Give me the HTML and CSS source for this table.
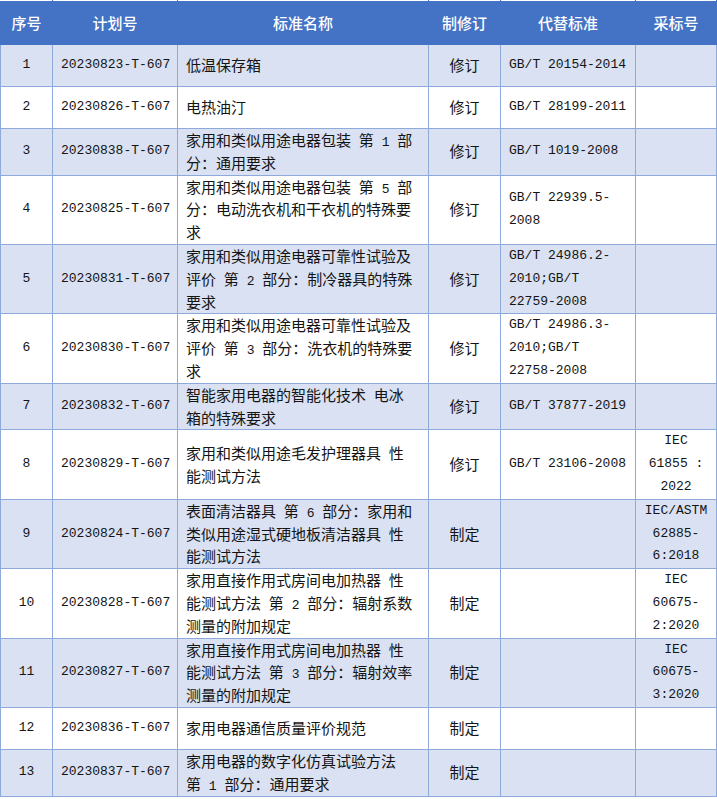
FILE: index.html
```html
<!DOCTYPE html>
<html lang="zh-CN">
<head>
<meta charset="utf-8">
<title>标准计划</title>
<link rel="stylesheet" href="styles.css">
</head>
<body>
<table class="std">
  <colgroup>
    <col class="c1"><col class="c2"><col class="c3"><col class="c4"><col class="c5"><col class="c6">
  </colgroup>
  <thead>
    <tr class="head">
      <th>序号</th><th>计划号</th><th>标准名称</th><th>制修订</th><th>代替标准</th><th>采标号</th>
    </tr>
  </thead>
  <tbody>
    <tr class="alt one">
      <td class="m ctr">1</td><td class="m">20230823-T-607</td><td>低温保存箱</td><td class="ctr">修订</td><td class="m">GB/T 20154-2014</td><td class="m ctr"></td>
    </tr>
    <tr class="one">
      <td class="m ctr">2</td><td class="m">20230826-T-607</td><td>电热油汀</td><td class="ctr">修订</td><td class="m">GB/T 28199-2011</td><td class="m ctr"></td>
    </tr>
    <tr class="alt">
      <td class="m ctr">3</td><td class="m">20230838-T-607</td><td>家用和类似用途电器包装<span class="s"> </span>第<span class="s"> 1 </span>部<br>分：通用要求</td><td class="ctr">修订</td><td class="m">GB/T 1019-2008</td><td class="m ctr"></td>
    </tr>
    <tr>
      <td class="m ctr">4</td><td class="m">20230825-T-607</td><td>家用和类似用途电器包装<span class="s"> </span>第<span class="s"> 5 </span>部<br>分：电动洗衣机和干衣机的特殊要<br>求</td><td class="ctr">修订</td><td class="m">GB/T 22939.5-<br>2008</td><td class="m ctr"></td>
    </tr>
    <tr class="alt">
      <td class="m ctr">5</td><td class="m">20230831-T-607</td><td>家用和类似用途电器可靠性试验及<br>评价<span class="s"> </span>第<span class="s"> 2 </span>部分：制冷器具的特殊<br>要求</td><td class="ctr">修订</td><td class="m">GB/T 24986.2-<br>2010;GB/T<br>22759-2008</td><td class="m ctr"></td>
    </tr>
    <tr>
      <td class="m ctr">6</td><td class="m">20230830-T-607</td><td>家用和类似用途电器可靠性试验及<br>评价<span class="s"> </span>第<span class="s"> 3 </span>部分：洗衣机的特殊要<br>求</td><td class="ctr">修订</td><td class="m">GB/T 24986.3-<br>2010;GB/T<br>22758-2008</td><td class="m ctr"></td>
    </tr>
    <tr class="alt">
      <td class="m ctr">7</td><td class="m">20230832-T-607</td><td>智能家用电器的智能化技术<span class="s"> </span>电冰<br>箱的特殊要求</td><td class="ctr">修订</td><td class="m">GB/T 37877-2019</td><td class="m ctr"></td>
    </tr>
    <tr>
      <td class="m ctr">8</td><td class="m">20230829-T-607</td><td>家用和类似用途毛发护理器具<span class="s"> </span>性<br>能测试方法</td><td class="ctr">修订</td><td class="m">GB/T 23106-2008</td><td class="m ctr">IEC<br>61855 :<br>2022</td>
    </tr>
    <tr class="alt">
      <td class="m ctr">9</td><td class="m">20230824-T-607</td><td>表面清洁器具<span class="s"> </span>第<span class="s"> 6 </span>部分：家用和<br>类似用途湿式硬地板清洁器具<span class="s"> </span>性<br>能测试方法</td><td class="ctr">制定</td><td class="m"></td><td class="m ctr">IEC/ASTM<br>62885-<br>6:2018</td>
    </tr>
    <tr>
      <td class="m ctr">10</td><td class="m">20230828-T-607</td><td>家用直接作用式房间电加热器<span class="s"> </span>性<br>能测试方法<span class="s"> </span>第<span class="s"> 2 </span>部分：辐射系数<br>测量的附加规定</td><td class="ctr">制定</td><td class="m"></td><td class="m ctr">IEC<br>60675-<br>2:2020</td>
    </tr>
    <tr class="alt">
      <td class="m ctr">11</td><td class="m">20230827-T-607</td><td>家用直接作用式房间电加热器<span class="s"> </span>性<br>能测试方法<span class="s"> </span>第<span class="s"> 3 </span>部分：辐射效率<br>测量的附加规定</td><td class="ctr">制定</td><td class="m"></td><td class="m ctr">IEC<br>60675-<br>3:2020</td>
    </tr>
    <tr class="one">
      <td class="m ctr">12</td><td class="m">20230836-T-607</td><td>家用电器通信质量评价规范</td><td class="ctr">制定</td><td class="m"></td><td class="m ctr"></td>
    </tr>
    <tr class="alt">
      <td class="m ctr">13</td><td class="m">20230837-T-607</td><td>家用电器的数字化仿真试验方法<br>第<span class="s"> 1 </span>部分：通用要求</td><td class="ctr">制定</td><td class="m"></td><td class="m ctr"></td>
    </tr>
  </tbody>
</table>
</body>
</html>
```

FILE: styles.css
```css
html, body {
  margin: 0;
  padding: 0;
  background: #ffffff;
}

.std {
  border-collapse: collapse;
  table-layout: fixed;
  width: 716px;
  margin: 0;
  color: #141414;
  font-family: "Noto Sans CJK SC", "Noto Sans", sans-serif;
  font-size: 15px;
}

.c1 { width: 52px; }
.c2 { width: 125px; }
.c3 { width: 251px; }
.c4 { width: 72px; }
.c5 { width: 135px; }
.c6 { width: 81px; }

.head {
  height: 44px;
  background: #4472c4;
}

.head th {
  color: #ffffff;
  font-weight: 500;
  font-size: 15px;
  text-align: center;
  vertical-align: middle;
  padding: 0;
  border: 1px solid #4472c4;
  border-top: 1px solid #ffffff;
  line-height: 20px;
}

.std td {
  border: 1px solid #8eaadb;
  padding: 0 7px 0 8px;
  vertical-align: middle;
  line-height: 22.8px;
  white-space: nowrap;
  text-align: left;
}

.std tbody tr {
  background: #ffffff;
}

.std tbody tr.alt {
  background: #d9e1f2;
}

.std tbody tr.one {
  height: 42px;
}

.std td.ctr {
  text-align: center;
  padding: 0 4px;
}

.m {
  font-family: "Liberation Mono", "DejaVu Sans Mono", monospace;
  font-size: 13px;
}

.s {
  font-family: "Liberation Mono", "DejaVu Sans Mono", monospace;
  font-size: 13px;
  line-height: 13px;
  white-space: pre;
}
```
